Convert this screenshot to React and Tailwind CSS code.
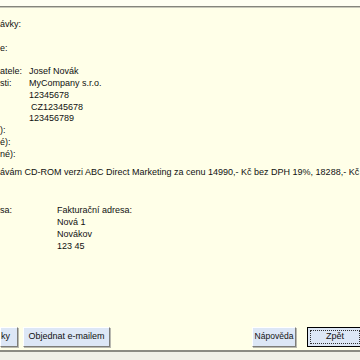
import React from 'react';

const rows = [
  { label: 'ávky:', value: '' },
  { label: '', value: '' },
  { label: 'e:', value: '' },
  { label: '', value: '' },
  { label: 'atele:', value: 'Josef Novák' },
  { label: 'sti:', value: 'MyCompany s.r.o.' },
  { label: '', value: '12345678' },
  { label: '', value: 'CZ12345678', indent: true },
  { label: '', value: '123456789' },
  { label: '):', value: '' },
  { label: 'é):', value: '' },
  { label: 'né):', value: '' },
];

const address = ['Fakturační adresa:', 'Nová 1', 'Novákov', '123 45'];

function Btn({ children, className = '' }) {
  return (
    <button
      className={`h-[20px] bg-[#dde7f6] border border-t-white border-l-white border-b-[#7d7d78] border-r-[#7d7d78] shadow-[1px_1px_0_#b9b9b0] text-[#111] ${className}`}
    >
      {children}
    </button>
  );
}

export default function App() {
  return (
    <div
      className="w-[360px] h-[360px] overflow-hidden flex flex-col bg-[#ffffe8] text-[#111] text-[9px] leading-[11.8px]"
      style={{ fontFamily: '"Liberation Sans", Arial, sans-serif' }}
    >
      {/* top strip */}
      <div className="h-[6px] bg-[#fffff2]" />
      <div className="h-[2px] border-t border-[#85857c] border-b-[1px] border-b-[#c9c9bb]" />

      <div className="flex-1 pt-[11px]">
        {rows.map((r, i) => (
          <div key={i} className="flex h-[11.8px]">
            <span className="w-[29px] shrink-0">{r.label}</span>
            <span className={r.indent ? 'pl-[2px]' : ''}>{r.value}</span>
          </div>
        ))}

        <p className="mt-[6px] whitespace-nowrap">
          ávám CD-ROM verzi ABC Direct Marketing za cenu 14990,- Kč bez DPH 19%, 18288,- Kč
        </p>

        <div className="mt-[27px] flex">
          <span className="w-[57px] shrink-0">sa:</span>
          <div>
            {address.map((a) => (
              <div key={a}>{a}</div>
            ))}
          </div>
        </div>
      </div>

      {/* buttons */}
      <div className="flex justify-between items-center pb-[3px]">
        <div className="flex gap-[5px]">
          <Btn className="w-[18px] text-left text-[9px]">ky</Btn>
          <Btn className="w-[87px] text-[9px]">Objednat e-mailem</Btn>
        </div>
        <div className="flex gap-[11px] mr-[-3px]">
          <Btn className="w-[44px] text-[8.5px]">Nápověda</Btn>
          <button className="h-[20px] w-[56px] bg-[#dde7f6] border border-black p-[2px] text-[9px]">
            <span className="flex h-full items-center justify-center border border-dotted border-[#333]">
              Zpět
            </span>
          </button>
        </div>
      </div>

      <div className="h-[2px] bg-[#8a8a84]" />
      <div className="h-[8px] bg-[#efefe8]" />
    </div>
  );
}
